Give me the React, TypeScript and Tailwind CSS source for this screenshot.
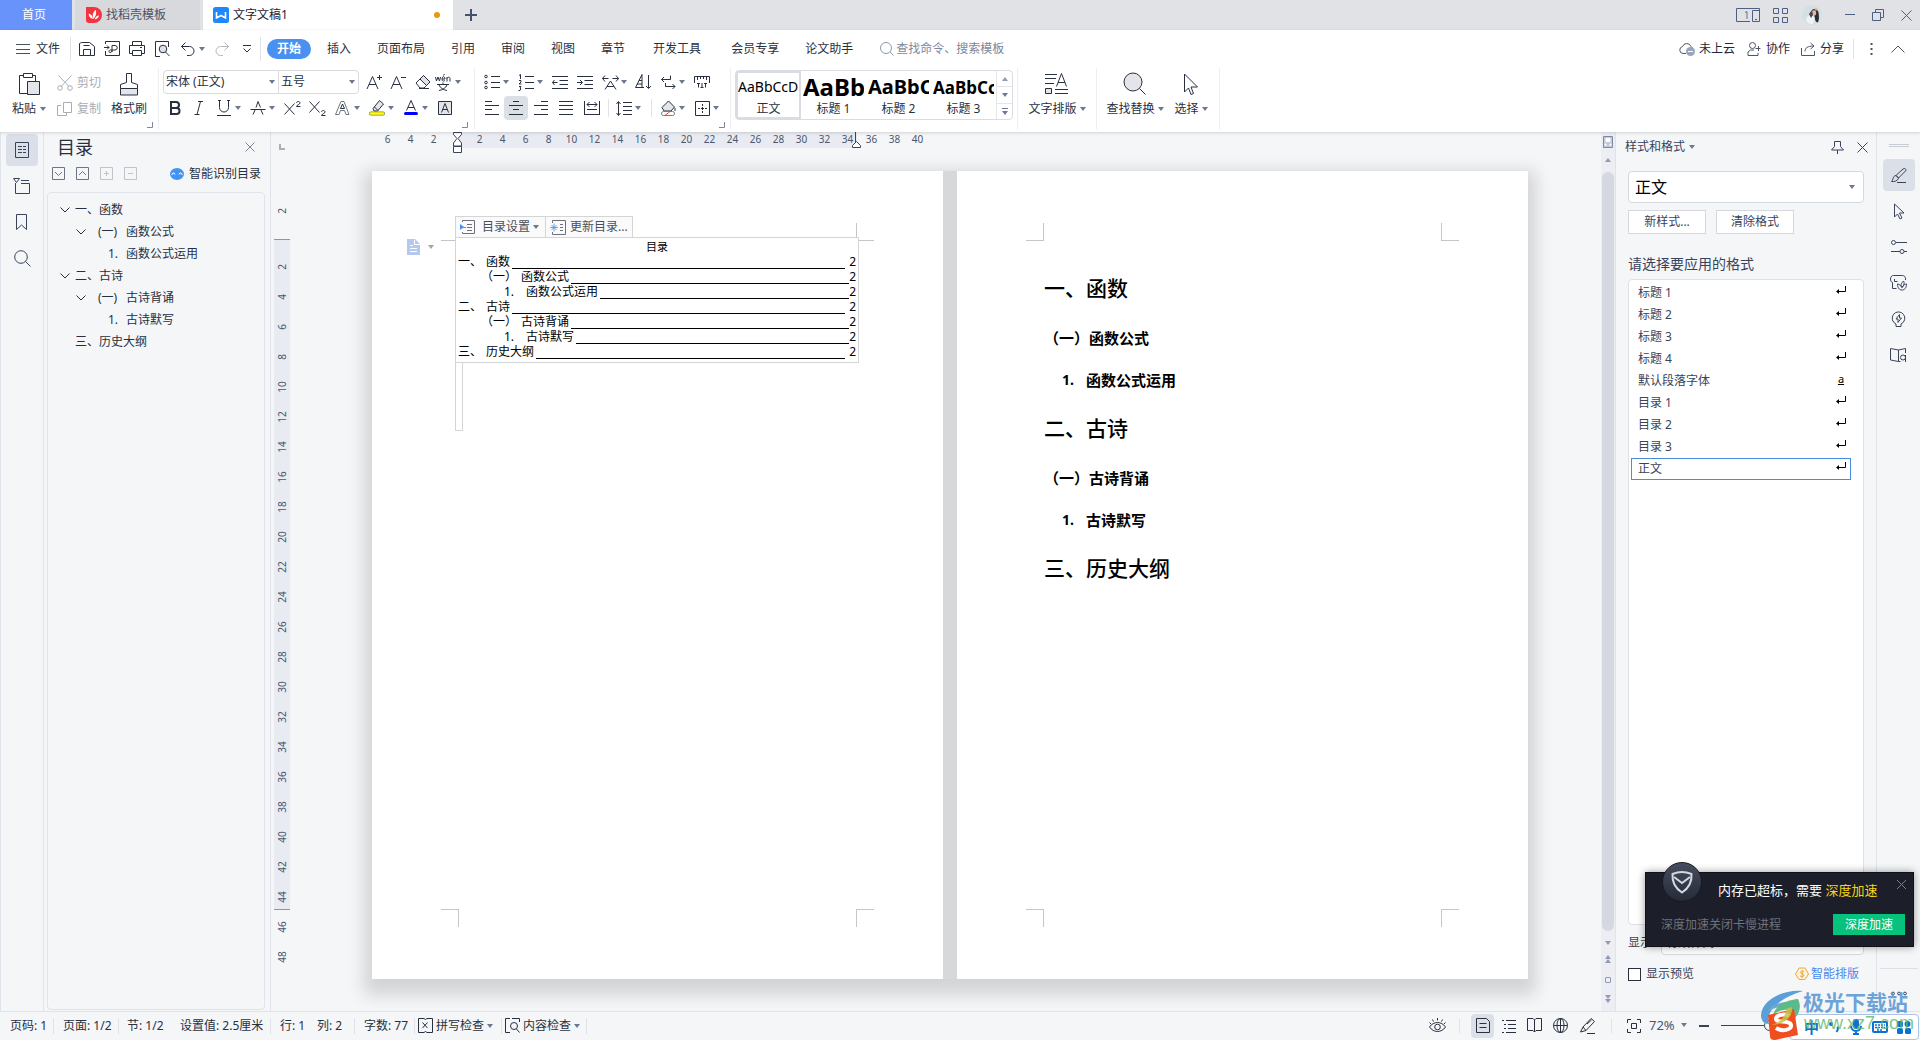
import React, { type ReactNode } from 'react';

type IconProps = { w?: number; h?: number; className?: string; sw?: number; children: ReactNode };

function Icon({ w = 16, h = 16, className = '', sw = 1, children }: IconProps) {
  return (
    <svg
      width={w}
      height={h}
      viewBox={`0 0 ${w} ${h}`}
      fill="none"
      stroke="currentColor"
      strokeWidth={sw}
      className={`shrink-0 ${className}`}
      aria-hidden="true"
    >
      {children}
    </svg>
  );
}

function Caret({ className = 'text-[#6b7891]' }: { className?: string }) {
  return (
    <svg width="6" height="4" viewBox="0 0 6 4" className={`shrink-0 ${className}`} aria-hidden="true">
      <path d="M0 0h6L3 4z" fill="currentColor" />
    </svg>
  );
}

function CaretUp({ className = 'text-[#8f9bb3]' }: { className?: string }) {
  return (
    <svg width="6" height="4" viewBox="0 0 6 4" className={`shrink-0 ${className}`} aria-hidden="true">
      <path d="M0 4h6L3 0z" fill="currentColor" />
    </svg>
  );
}

function CornerMark() {
  return (
    <Icon w={6} h={6} className="mb-1 self-end text-[#7d889e]">
      <path d="M5.500 0v5.500H0" />
    </Icon>
  );
}

function Tool({ label, className = 'w-6', children }: { label: string; className?: string; children: ReactNode }) {
  return (
    <button type="button" aria-label={label} className={`flex h-6 shrink-0 items-center justify-center ${className}`}>
      {children}
    </button>
  );
}

function SplitTool({ label, children }: { label: string; children: ReactNode }) {
  return (
    <button type="button" aria-label={label} className="flex h-6 w-[34px] shrink-0 items-center pl-1">
      <span className="flex w-[18px] justify-center">{children}</span>
      <span className="flex w-2.5 justify-center">
        <Caret />
      </span>
    </button>
  );
}

function VRule({ className = 'h-6' }: { className?: string }) {
  return <div className={`w-px shrink-0 bg-[#e1e3e8] ${className}`} />;
}

/* ---------------------------------------------------------------- title bar */

function TitleBar() {
  return (
    <header className="flex h-[30px] shrink-0 items-stretch bg-[#e1e2e6]">
      <button type="button" className="w-[72px] bg-[#6893fa] pr-1 text-xs text-white">
        首页
      </button>
      <button type="button" className="ml-[3px] flex w-[125px] items-center gap-1 bg-[#d8d9dc] pl-[11px] text-xs text-[#4a5468]">
        <svg width="16" height="16" viewBox="0 0 16 16" aria-hidden="true">
          <path d="M0 0h8a8 8 0 0 1 0 16H3a3 3 0 0 1-3-3z" fill="#f5333f" />
          <path d="M7 12C3.500 11 2.500 8.500 2.800 6.500 5 7 6.500 9 7 12zM7.300 12C6 8.500 7 5 9.500 2.800 11 6 9.800 10 7.300 12zM8.500 12.300C9.500 10 11 8.500 13 8.300 13 10.500 11 12.300 8.500 12.300z" fill="#fff" />
        </svg>
        找稻壳模板
      </button>
      <div className="ml-[3px] flex w-[250px] items-center bg-white pr-[13px] pl-2.5">
        <button type="button" className="flex items-center gap-1 text-xs text-[#1d2433]">
          <svg width="16" height="16" viewBox="0 0 16 16" aria-hidden="true">
            <rect width="16" height="16" rx="2.500" fill="#1f86fb" />
            <path d="M3.500 5v6L8 8.500l4.500 2.500V5" fill="none" stroke="#fff" strokeWidth="1.600" />
          </svg>
          文字文稿1
        </button>
        <span className="ml-auto size-1.5 rounded-full bg-[#e59a0c]" />
      </div>
      <button type="button" aria-label="新建" className="flex w-9 items-center justify-center text-[#45526c]">
        <Icon w={12} h={12} sw={2}>
          <path d="M6 0v12M0 6h12" />
        </Icon>
      </button>
      <div className="ml-auto flex items-center pr-2 text-[#4d5f85]">
        <button type="button" aria-label="窗口布局" className="flex w-6 justify-center">
          <svg width="24" height="14" viewBox="0 0 24 14" fill="none" stroke="currentColor" aria-hidden="true">
            <path d="M14 13.500H.5V.5h23v13H16.500M16.500 2.500h7M16.500 2.500v11M19 11.500h2" />
            <path d="M9 4.500l2-1V11" stroke="#6f6f86" />
          </svg>
        </button>
        <button type="button" aria-label="应用" className="ml-3 flex w-4 justify-center">
          <Icon w={15} h={15}>
            <path d="M.5.5h5v5h-5zM9.500.5h5v5h-5zM.5 9.500h5v5h-5zM9.500 9.500h5v5h-5z" />
          </Icon>
        </button>
        <button type="button" aria-label="账户" className="ml-3.5 flex">
          <svg width="20" height="20" viewBox="0 0 20 20" aria-hidden="true">
            <circle cx="10" cy="10" r="10" fill="#d3dfe5" />
            <path d="M10 5c2-2 6-1 6.500 2.500.4 3.500 1 6-.5 10-2 0-3.500-3-3.500-6z" fill="#2e2a33" />
            <ellipse cx="12" cy="8" rx="2.200" ry="2.800" fill="#e3b9ab" />
            <path d="M5 12c2-2 4-3 6-1l2 2-2 6c-3 .5-5-1-7-3z" fill="#eef4f6" />
            <path d="M7 9l3-4 1 5-2 3z" fill="#4e4550" />
            <circle cx="14" cy="4.500" r="1.200" fill="#d9b24b" />
          </svg>
        </button>
        <VRule className="ml-2.5 h-5 bg-[#c6c9d0]" />
        <button type="button" aria-label="最小化" className="ml-3 flex">
          <Icon w={10} h={10}>
            <path d="M0 4.500h10" />
          </Icon>
        </button>
        <button type="button" aria-label="还原" className="ml-[17px] flex">
          <Icon w={12} h={12}>
            <path d="M.5 3.500h8v8h-8zM3.500 3V.5h8v8H9" />
          </Icon>
        </button>
        <button type="button" aria-label="关闭" className="ml-[17px] flex">
          <Icon w={11} h={11}>
            <path d="M.5.5l10 10M10.500.5l-10 10" />
          </Icon>
        </button>
      </div>
    </header>
  );
}

/* ----------------------------------------------------------------- menu row */

const MENUS: { label: string; cls: string }[] = [
  { label: '插入', cls: 'ml-[3px]' },
  { label: '页面布局', cls: '' },
  { label: '引用', cls: '' },
  { label: '审阅', cls: '' },
  { label: '视图', cls: '' },
  { label: '章节', cls: '' },
  { label: '开发工具', cls: 'ml-0.5' },
  { label: '会员专享', cls: 'ml-1' },
  { label: '论文助手', cls: '' },
];

function MenuRow() {
  return (
    <nav className="flex h-[38px] shrink-0 items-center text-xs text-[#28303f]">
      <button type="button" className="ml-4 flex items-center gap-1.5">
        <Icon w={14} h={12} className="text-[#4a5261]">
          <path d="M0 1.500h14M0 6.500h14M0 10.500h14" />
        </Icon>
        文件
      </button>
      <VRule className="mr-1 ml-2.5 h-6" />
      <Tool label="保存" className="w-6">
        <Icon>
          <path d="M4.500 14.500h-4V2.500l2-1h8l5 4v9h-4M4.500 14.500v-6h7v6zM4.500 4.500h6" />
        </Icon>
      </Tool>
      <Tool label="输出为PDF" className="w-[26px]">
        <Icon>
          <path d="M1.500 3V.5h14v14h-14V10M0 6.500h5M3 4.500l2 2-2 2M8 11V4.500h3a2 2 0 0 1 0 4.500H6.500c-2 0-2 2.500-.5 2.500s2-1 2-2" />
        </Icon>
      </Tool>
      <Tool label="打印" className="w-6">
        <Icon>
          <path d="M3.500 4.500v-4h9v4M3.500 12.500h-3v-8h15v8h-3M3.500 9.500h9v5h-9zM11 6.500h2" />
        </Icon>
      </Tool>
      <Tool label="打印预览" className="w-[26px]">
        <Icon>
          <path d="M6 15.500H1.500V.5h13V6" />
          <circle cx="9" cy="8" r="3.800" fill="#dfe1e6" />
          <path d="M11.500 11l4 4" />
        </Icon>
      </Tool>
      <button type="button" aria-label="撤销" className="flex w-[34px] items-center gap-1 pl-1.5">
        <Icon w={14} h={14}>
          <path d="M4.500.5l-4 4 4 4M.5 4.500h8a4.500 4.500 0 0 1 0 9H6" />
        </Icon>
        <Caret />
      </button>
      <Tool label="恢复" className="w-[25px]">
        <Icon w={14} h={14} className="text-[#b3b8c2]">
          <path d="M9.500.5l4 4-4 4M13.500 4.500h-8a4.500 4.500 0 0 0 0 9H8" />
        </Icon>
      </Tool>
      <Tool label="自定义快速访问工具栏" className="w-[26px]">
        <Icon w={10} h={8}>
          <path d="M1 .5h8M1.500 3.500L5 7l3.500-3.500" />
        </Icon>
      </Tool>
      <VRule className="h-6" />
      <button type="button" className="ml-1.5 h-5 w-11 rounded-full bg-[#4a90f0] text-xs font-bold text-white">
        开始
      </button>
      {MENUS.map((m) => (
        <button key={m.label} type="button" className={`h-6 px-[13px] ${m.cls}`}>
          {m.label}
        </button>
      ))}
      <label className="ml-3.5 flex items-center gap-0.5 text-[#7c879c]">
        <Icon w={14} h={14} className="text-[#8c98b0]">
          <circle cx="6" cy="6" r="5.500" />
          <path d="M10 10l3.500 3.500" />
        </Icon>
        <input
          aria-label="查找命令、搜索模板"
          placeholder="查找命令、搜索模板"
          className="w-32 bg-transparent outline-none placeholder:text-[#7c879c]"
        />
      </label>
      <div className="ml-auto flex items-center pr-[15px] text-[#4d5666]">
        <button type="button" className="flex items-center gap-1 text-[#1f2838]">
          <Icon w={16} h={14} className="text-[#4d5666]">
            <path d="M7 11.500H4A3.500 3.500 0 0 1 3.500 4.600 4.500 4.500 0 0 1 12 4.500l1.500 1.500" />
            <circle cx="11.500" cy="9.500" r="4.500" fill="#9aa5bc" stroke="none" />
            <path d="M9 9.500h5" stroke="#fff" />
          </Icon>
          未上云
        </button>
        <button type="button" className="ml-3 flex items-center gap-[5px] text-[#1f2838]">
          <Icon w={14} h={14} className="text-[#4d5666]">
            <circle cx="5.500" cy="3.500" r="3" />
            <path d="M7 8H3.500L1 10v3.500h10V11M8.500 6.500h5M11.500 4v5" />
          </Icon>
          协作
        </button>
        <button type="button" className="ml-[11px] flex items-center gap-[5px] text-[#1f2838]">
          <Icon w={14} h={14} className="text-[#4d5666]">
            <path d="M.5 6v7.500h13V9M4 9.500C4 6 6.500 4 12.500 4M9.500 1l3.500 3-3.500 3" />
          </Icon>
          分享
        </button>
        <VRule className="ml-[9px] h-5" />
        <button type="button" aria-label="更多" className="ml-4 flex">
          <svg width="3" height="13" viewBox="0 0 3 13" fill="currentColor" aria-hidden="true">
            <path d="M.5 0h2v2h-2zM.5 5h2v2h-2zM.5 10h2v2h-2z" />
          </svg>
        </button>
        <button type="button" aria-label="收起功能区" className="ml-[18px] flex">
          <Icon w={14} h={8}>
            <path d="M.5 7.500L7 1l6.500 6.500" />
          </Icon>
        </button>
      </div>
    </nav>
  );
}

/* ------------------------------------------------------------------ ribbon */

function ClipboardGroup() {
  return (
    <div className="flex w-[158px] shrink-0 items-start pl-[11px]">
      <button type="button" className="flex w-9 flex-col items-center text-[#28303f]">
        <Icon w={22} h={24} className="mt-1">
          <path d="M9 21.500H1.500V3.500h4M14.500 3.500h3V9M5.500 1.500h9v4h-9z" />
          <path d="M9.500 9.500h12v13h-12z" fill="#e4e5e9" />
        </Icon>
        <span className="mt-1 flex items-center gap-1">
          粘贴
          <Caret />
        </span>
      </button>
      <div className="ml-2.5 flex flex-col text-[#a9adb5]">
        <button type="button" className="mt-0.5 flex h-[26px] items-center gap-1">
          <Icon>
            <path d="M1.500.5l10.500 11M14.500.5L4 11.500" />
            <circle cx="3" cy="13" r="2.300" />
            <circle cx="13" cy="13" r="2.300" />
          </Icon>
          剪切
        </button>
        <button type="button" className="flex h-[26px] items-center gap-1">
          <Icon>
            <path d="M6.500 1.500h8v10h-8zM4 4.500H.5v10h9V12" />
          </Icon>
          复制
        </button>
      </div>
      <button type="button" className="ml-2.5 flex flex-col items-center text-[#28303f]">
        <Icon w={18} h={24} className="mt-1">
          <path d="M.5 16.500h17v6.500H.5z" fill="#e4e5e9" />
          <path d="M.5 16.500v-4l6-2V1.500h5v9l6 2v4" />
        </Icon>
        <span className="mt-1">格式刷</span>
      </button>
      <CornerMark />
    </div>
  );
}

function FontGroup() {
  return (
    <div className="flex w-[315px] shrink-0 pl-1">
      <div className="flex w-[298px] shrink-0 flex-col">
        <div className="mt-0.5 flex h-6 items-center">
          <div className="flex h-6 w-[196px] shrink-0 items-center rounded-sm border border-[#d9dbe0]">
            <button type="button" aria-label="字体" className="flex h-full w-[115px] items-center justify-between border-r border-[#d9dbe0] pr-[3px] pl-0.5">
              宋体 (正文)
              <Caret />
            </button>
            <button type="button" aria-label="字号" className="flex h-full flex-1 items-center justify-between pr-[3px] pl-0.5">
              五号
              <Caret />
            </button>
          </div>
          <Tool label="增大字号" className="ml-[3px] w-6">
            <Icon>
              <path d="M1 15L6.500 2.500 12 15M3 10.500h7M11 3.500h5M13.500 1v5" />
            </Icon>
          </Tool>
          <Tool label="减小字号" className="w-6">
            <Icon>
              <path d="M1 15L6.500 2.500 12 15M3 10.500h7M11 3.500h5" />
            </Icon>
          </Tool>
          <Tool label="清除格式" className="w-[25px]">
            <Icon>
              <path d="M1 9l7.500-7.500L15 8l-6 6H5z" />
              <path d="M8.500 1.500L15 8l-3.500 3.500L5 5z" fill="#dfe1e6" />
              <path d="M4 14.500h10" />
            </Icon>
          </Tool>
          <button type="button" aria-label="拼音指南" className="flex shrink-0 items-center gap-1">
            <svg width="16" height="18" viewBox="0 0 16 18" fill="none" stroke="currentColor" aria-hidden="true">
              <path d="M.5 4l1 4 1.500-4 1.500 4 1-4M7 6h3c0-3-3-3-3 0s2 2 3 1.500M8.500 2.500l1-1.500M12 8.500V4M12 5.500c1-2 3-1.500 3 0v3M2 11.500h12M8 9.500v2M4 12c1 3 5 5 8 5.500M12 12c-1 3-5 5-8 5.500" />
            </svg>
            <Caret />
          </button>
        </div>
        <div className="mt-0.5 flex h-6 items-center">
          <Tool label="加粗">
            <Icon w={12} h={14} sw={2}>
              <path d="M2 1h5a2.800 2.800 0 0 1 0 6H2zM2 7h5.500a3 3 0 0 1 0 6H2z" />
            </Icon>
          </Tool>
          <Tool label="倾斜">
            <Icon w={10} h={14}>
              <path d="M4 .5h5M.5 13.500h5M6.500.5l-3.500 13" />
            </Icon>
          </Tool>
          <SplitTool label="下划线">
            <Icon w={16} h={16}>
              <path d="M3.500.5v7a4.500 4.500 0 0 0 9 0v-7M2 .5h3M11 .5h3M1 15.500h14" />
            </Icon>
          </SplitTool>
          <SplitTool label="删除线">
            <Icon w={16} h={14}>
              <path d="M3 13.500L5 9M11 9l2 4.500M6 6.500L8 .5l2.500 6M.5 8.500h15" />
            </Icon>
          </SplitTool>
          <Tool label="上标" className="ml-0.5 w-6">
            <Icon w={18} h={14}>
              <path d="M.5 2.500l10 11M10.500 2.500l-10 11M12.500 2c0-2 3.500-2 3.500 0 0 1.500-3.500 2-3.500 3.500h4" />
            </Icon>
          </Tool>
          <Tool label="下标" className="w-[25px]">
            <Icon w={18} h={15}>
              <path d="M.5.5l10 11M10.500.5l-10 11M12.500 11c0-2 3.500-2 3.500 0 0 1.500-3.500 2-3.500 3.500h4" />
            </Icon>
          </Tool>
          <SplitTool label="文字效果">
            <Icon w={16} h={15}>
              <path d="M.5 13.500L6 .5h3l5 13h-3l-1.500-4h-4l-1.500 4z" className="text-[#6f7683]" />
              <path d="M5.500 7.500L7.500 3l2 4.500z" />
            </Icon>
          </SplitTool>
          <SplitTool label="突出显示">
            <Icon w={16} h={16}>
              <path d="M4 8.500l6.500-8 4 3.500-6 7H5zM5.500 7l3.500 3.500" fill="#e4e5e9" />
              <path d="M2 13.500h12" stroke="#7e7e4a" strokeWidth="4" strokeLinecap="round" />
              <path d="M2 13.500h12" stroke="#ffff00" strokeWidth="2.600" strokeLinecap="round" />
            </Icon>
          </SplitTool>
          <SplitTool label="字体颜色">
            <Icon w={14} h={16}>
              <path d="M2.500 10.500L7 .5l4.500 10M4 7.500h6" />
              <path d="M1.500 13.500h11" stroke="#0000ff" strokeWidth="3" strokeLinecap="round" />
            </Icon>
          </SplitTool>
          <Tool label="字符底纹" className="w-[25px]">
            <Icon w={14} h={14}>
              <path d="M.5.5h13v13H.5z" fill="#e4e5e9" />
              <path d="M3.500 11.500l3.500-9 3.500 9M4.500 8.500h5" />
            </Icon>
          </Tool>
        </div>
      </div>
      <div className="ml-auto flex items-end pr-1.5">
        <CornerMark />
      </div>
    </div>
  );
}

function ParagraphGroup() {
  return (
    <div className="flex w-[255px] shrink-0 pl-1">
      <div className="flex w-[240px] shrink-0 flex-col">
        <div className="mt-0.5 flex h-6 items-center">
          <SplitTool label="项目符号">
            <Icon w={16} h={16}>
              <path d="M7 2.500h9M7 8.500h9M7 13.500h9" />
              <circle cx="2" cy="2.500" r="1.300" />
              <circle cx="2" cy="8.500" r="1.300" />
              <circle cx="2" cy="13.500" r="1.300" />
            </Icon>
          </SplitTool>
          <SplitTool label="编号">
            <Icon w={16} h={17}>
              <path d="M7 2.500h9M7 8.500h9M7 14.500h9M1 1.500l1.500-1V5M1 6.500h2v1.500L1 10h2.500M1 12.500h2L2 14l1 1-1 1.500H.5" />
            </Icon>
          </SplitTool>
          <Tool label="减少缩进量" className="w-[25px]">
            <Icon w={16} h={14}>
              <path d="M0 1.500h16M7.500 5.500H16M7.500 9.500H16M0 13.500h16M.5 7.500h5M2.500 5L.5 7.500l2 2.500" />
            </Icon>
          </Tool>
          <Tool label="增加缩进量" className="w-[25px]">
            <Icon w={16} h={14}>
              <path d="M0 1.500h16M7.500 5.500H16M7.500 9.500H16M0 13.500h16M0 7.500h5M3 5l2.500 2.500L3 10" />
            </Icon>
          </Tool>
          <SplitTool label="中文版式">
            <Icon w={17} h={15}>
              <path d="M3 14.500L8.500 6l5.500 8.500M5 11.500h7M.5 3.500h6M3 .5l-2.500 3 2.500 3M10.500 3.500h6M14 .5l2.500 3-2.500 3" />
            </Icon>
          </SplitTool>
          <Tool label="排序">
            <Icon w={16} h={16}>
              <path d="M.5 13.500L7 .5v13M4 6.500h3M2 10h5M.5 13.500H9M13.500 1v13M11 12l2.500 2.500L16 12" />
            </Icon>
          </Tool>
          <SplitTool label="显示段落标记">
            <Icon w={15} h={15}>
              <path d="M9.500.5v4H.5M3 2L.5 4.500 3 7M4.500 8v3.500h9.500M11.500 9l2.500 2.500-2.500 2.500" />
            </Icon>
          </SplitTool>
          <Tool label="制表位" className="w-[26px]">
            <Icon w={16} h={12}>
              <path d="M.5 7V.5h15V7M3.500 1v3M6.500 1v2M9.500 1v2M12.500 1v3M4.500 11.500v-4M3 7.500h3M8 7v4M6.500 11.500h3M11.500 11.500v-4M10 7.500h3" />
            </Icon>
          </Tool>
        </div>
        <div className="mt-0.5 flex h-6 items-center">
          <Tool label="左对齐" className="w-[25px]">
            <Icon w={14} h={14}>
              <path d="M0 .5h7M0 4.500h14M0 8.500h7M0 13.500h14" />
            </Icon>
          </Tool>
          <Tool label="居中对齐" className="w-6 rounded-sm bg-[#dbdfe6]">
            <Icon w={14} h={14}>
              <path d="M4 .5h6M0 4.500h14M4 8.500h6M0 13.500h14" />
            </Icon>
          </Tool>
          <Tool label="右对齐" className="w-[25px]">
            <Icon w={14} h={14}>
              <path d="M7 .5h7M0 4.500h14M7 8.500h7M0 13.500h14" />
            </Icon>
          </Tool>
          <Tool label="两端对齐" className="w-[26px]">
            <Icon w={14} h={14}>
              <path d="M0 .5h14M0 4.500h14M0 8.500h14M0 13.500h14" />
            </Icon>
          </Tool>
          <Tool label="分散对齐" className="w-[25px]">
            <Icon w={16} h={14}>
              <path d="M.5 0v14M15.500 0v14M3 8.500h10M0 13.500h16M3 3.500h10M5.500 1L3 3.500 5.500 6M10.500 1L13 3.500 10.500 6" />
            </Icon>
          </Tool>
          <VRule className="mr-0.5 ml-1 h-[18px]" />
          <SplitTool label="行距">
            <Icon w={16} h={15}>
              <path d="M7 1.500h9M7 5.500h9M7 9.500h9M7 13.500h9M2.500 1v13M.5 3l2-2.500 2 2.500M.5 12l2 2.500 2-2.500" />
            </Icon>
          </SplitTool>
          <VRule className="mr-[3px] ml-1.5 h-[18px]" />
          <SplitTool label="底纹颜色">
            <Icon w={17} h={17}>
              <path d="M2 7.500L8.500 1l6 6-3.500 4H4z" fill="#e4e5e9" />
              <path d="M15 8v3" />
              <rect x="1.500" y="11.500" width="13" height="4" rx="2" fill="#fff" stroke="#777c86" />
              <path d="M5 15.500l5-4" stroke="#e0453f" />
            </Icon>
          </SplitTool>
          <SplitTool label="边框">
            <Icon w={15} h={15}>
              <path d="M.5.5h14v14H.5zM7.500 3v2M7.500 6v3M7.500 10v2M3 7.500h2M6 7.500h3M10 7.500h2" />
            </Icon>
          </SplitTool>
        </div>
      </div>
      <CornerMark />
    </div>
  );
}

const STYLE_CARDS: { name: string; sample: string; cls: string; box: string }[] = [
  { name: '正文', sample: 'AaBbCcD', cls: 'text-sm', box: 'border-[#d9dce3]' },
  { name: '标题 1', sample: 'AaBb', cls: 'text-2xl font-bold', box: 'border-transparent' },
  { name: '标题 2', sample: 'AaBbC', cls: 'text-xl font-bold', box: 'border-transparent' },
  { name: '标题 3', sample: 'AaBbCc', cls: 'text-[17px] font-bold', box: 'border-transparent' },
];

function StylesGroup() {
  return (
    <div className="flex w-[286px] shrink-0 pt-0.5 pl-1">
      <div className="flex h-[50px] w-[278px] rounded-sm border border-[#d9dce3]">
        {STYLE_CARDS.map((s) => (
          <button key={s.name} type="button" className={`flex h-12 w-[65px] shrink-0 flex-col items-start overflow-hidden border-2 ${s.box}`}>
            <span className={`flex h-7 items-center text-black ${s.cls}`}>
              <span className="leading-none">{s.sample}</span>
            </span>
            <span className="w-full text-center text-xs leading-4">{s.name}</span>
          </button>
        ))}
        <div className="ml-auto flex w-4 flex-col border-l border-[#e4e6ea]">
          <button type="button" aria-label="上一行样式" className="flex flex-1 items-center justify-center border-b border-[#e4e6ea]">
            <CaretUp />
          </button>
          <button type="button" aria-label="下一行样式" className="flex flex-1 items-center justify-center border-b border-[#e4e6ea]">
            <Caret />
          </button>
          <button type="button" aria-label="更多样式" className="flex flex-1 flex-col items-center justify-center gap-0.5">
            <span className="h-px w-1.5 bg-[#6b7891]" />
            <Caret />
          </button>
        </div>
      </div>
    </div>
  );
}

function BigTool({ label, icon, className }: { label: string; icon: ReactNode; className: string }) {
  return (
    <button type="button" className={`flex shrink-0 flex-col items-center ${className}`}>
      <span className="mt-1 flex h-6 items-center">{icon}</span>
      <span className="mt-1 flex items-center gap-[3px]">
        {label}
        <Caret />
      </span>
    </button>
  );
}

function Ribbon() {
  return (
    <div className="flex h-16 shrink-0 text-xs leading-[18px] text-[#28303f]">
      <ClipboardGroup />
      <VRule className="h-[61px] bg-[#eceef1]" />
      <FontGroup />
      <VRule className="h-[61px] bg-[#eceef1]" />
      <ParagraphGroup />
      <VRule className="h-[61px] bg-[#eceef1]" />
      <StylesGroup />
      <VRule className="h-[61px] bg-[#eceef1]" />
      <BigTool
        label="文字排版"
        className="w-[78px]"
        icon={
          <Icon w={24} h={22}>
            <path d="M0 1.500h12M0 5.500h11M0 10.500h9M11.500 13.500l5-13 5 13M13 9.500h7M10 16.500h13M10 20.500h13" />
            <path d="M.5 15.500h6v5h-6z" fill="#e4e5e9" />
          </Icon>
        }
      />
      <VRule className="h-[61px] bg-[#eceef1]" />
      <BigTool
        label="查找替换"
        className="ml-1 w-[68px]"
        icon={
          <Icon w={24} h={24}>
            <circle cx="10" cy="10" r="9" fill="#e4e5e9" />
            <path d="M16.500 16.500l6 6" />
          </Icon>
        }
      />
      <BigTool
        label="选择"
        className="w-[44px]"
        icon={
          <Icon w={16} h={22}>
            <path d="M1.500 1v18l4-4 2.500 6.500 2.500-1L8 14h6.500z" />
          </Icon>
        }
      />
      <VRule className="ml-1.5 h-[61px] bg-[#eceef1]" />
    </div>
  );
}

/* ------------------------------------------------------------ left sidebar */

function LeftRail() {
  return (
    <aside className="flex w-11 shrink-0 flex-col items-center gap-1 border-x border-[#e0e3ea] pt-0.5 text-[#39435a]">
      <Tool label="目录" className="h-8 w-8 rounded-sm bg-[#dbdfe7]">
        <Icon>
          <path d="M1.500.5h13v15h-13zM4 4.500h4M9 4.500h3M4 7.500h4M9 7.500h3M4 10.500h4M9 10.500h3" />
        </Icon>
      </Tool>
      <Tool label="章节" className="h-8 w-8">
        <Icon w={18} h={16}>
          <path d="M2.500 5v10.500h14v-10H8M8 2.500h8M.5.5h6L3.500 4.500z" />
        </Icon>
      </Tool>
      <Tool label="书签" className="h-8 w-8">
        <Icon w={12} h={17}>
          <path d="M.5.5h10v15l-5-4.500-5 4.500z" />
        </Icon>
      </Tool>
      <Tool label="查找" className="h-8 w-8">
        <Icon w={17} h={17}>
          <circle cx="7" cy="7" r="6.300" />
          <path d="M11.500 11.500l5 5" />
        </Icon>
      </Tool>
    </aside>
  );
}

const OUTLINE: { level: 1 | 2 | 3; num: string; text: string; open?: boolean }[] = [
  { level: 1, num: '一、', text: '函数', open: true },
  { level: 2, num: '(一)', text: '函数公式', open: true },
  { level: 3, num: '1.', text: '函数公式运用' },
  { level: 1, num: '二、', text: '古诗', open: true },
  { level: 2, num: '(一)', text: '古诗背诵', open: true },
  { level: 3, num: '1.', text: '古诗默写' },
  { level: 1, num: '三、', text: '历史大纲' },
];

const OUTLINE_PAD = { 1: 'pl-3', 2: 'pl-7', 3: 'pl-10' };
const OUTLINE_MARK = { 1: 'w-[15px]', 2: 'w-5', 3: 'w-5' };
const OUTLINE_NUM = { 1: 'w-6', 2: 'w-[30px] pl-0.5', 3: 'w-[18px]' };

function OutlinePanel() {
  return (
    <section className="flex w-[227px] shrink-0 flex-col border-r border-[#e0e3ea] pr-[5px] pb-px pl-[3px] text-xs text-[#28303f]">
      <div className="flex h-[30px] items-center pr-2.5 pl-2.5">
        <h2 className="text-lg leading-7">目录</h2>
        <button type="button" aria-label="关闭目录" className="ml-auto flex text-[#7a8599]">
          <Icon w={10} h={10}>
            <path d="M.5.5l9 9M9.500.5l-9 9" />
          </Icon>
        </button>
      </div>
      <div className="flex h-[23px] items-center gap-[11px] pl-[5px] text-[#6d7585]">
        <button type="button" aria-label="展开">
          <Icon w={13} h={13}>
            <path d="M.5.5h12v12H.5zM3 5l3.500 3.500L10 5" />
          </Icon>
        </button>
        <button type="button" aria-label="折叠">
          <Icon w={13} h={13}>
            <path d="M.5.5h12v12H.5zM3 8l3.500-3.500L10 8" />
          </Icon>
        </button>
        <button type="button" aria-label="新增" className="text-[#bfc3cb]">
          <Icon w={13} h={13}>
            <path d="M.5.5h12v12H.5zM6.500 4v5M4 6.500h5" />
          </Icon>
        </button>
        <button type="button" aria-label="删除" className="text-[#bfc3cb]">
          <Icon w={13} h={13}>
            <path d="M.5.5h12v12H.5zM4 6.500h5" />
          </Icon>
        </button>
        <button type="button" className="mr-1 ml-auto flex items-center gap-[5px] text-[#28303f]">
          <svg width="14" height="12" viewBox="0 0 14 12" aria-hidden="true">
            <ellipse cx="7" cy="6" rx="7" ry="6" fill="#4393f3" />
            <path d="M1.500 7l1.500-2h1l1 1.500M9 6.500L10 5h1l1.500 2" stroke="#fff" fill="none" />
          </svg>
          智能识别目录
        </button>
      </div>
      <ul className="mt-[7px] flex-1 rounded-sm border border-[#e0e3ea] pt-1.5">
        {OUTLINE.map((o, i) => (
          <li key={i} className={`flex h-[22px] items-center ${OUTLINE_PAD[o.level]}`}>
            <span className={`flex shrink-0 ${OUTLINE_MARK[o.level]}`}>
              {o.open && (
                <Icon w={10} h={6}>
                  <path d="M.5.5L5 5 9.500.5" />
                </Icon>
              )}
            </span>
            <span className={`shrink-0 ${OUTLINE_NUM[o.level]}`}>{o.num}</span>
            {o.text}
          </li>
        ))}
      </ul>
    </section>
  );
}

/* --------------------------------------------------------------- document */

const V_NUMS = Array.from({ length: 22 }, (_, i) => (i + 1) * 2);

function VerticalRuler() {
  return (
    <div className="flex w-[22px] shrink-0 flex-col items-center text-[10px] leading-none text-[#4b566d]">
      <div className="flex h-[107px] w-4 flex-col items-center">
        <span className="mt-3 h-1.5 w-1.5 border-b-2 border-l-2 border-[#a9aeba]" />
        <span className="mt-[46px] flex h-[30px] items-center">
          <span className="-rotate-90">2</span>
        </span>
      </div>
      <div className="flex h-[671px] w-4 flex-col border-y border-[#8b96ad] bg-[#e8ebf1] pt-3">
        {V_NUMS.map((n) => (
          <span key={n} className="flex h-[30px] shrink-0 items-center justify-center">
            <span className="-rotate-90">{n}</span>
          </span>
        ))}
      </div>
      {[46, 48].map((n) => (
        <span key={n} className="flex h-[30px] items-center justify-center pt-1">
          <span className="-rotate-90">{n}</span>
        </span>
      ))}
    </div>
  );
}

function RulerNumbers({ nums }: { nums: number[] }) {
  return (
    <>
      {nums.map((n) => (
        <span key={n} className="w-[23px] shrink-0 text-center">
          {n}
        </span>
      ))}
    </>
  );
}

function HorizontalRuler() {
  return (
    <div className="flex h-4 shrink-0 pl-1 text-[10px] leading-[14px] text-[#4b566d]">
      <div className="flex w-[81px]">
        <RulerNumbers nums={[6, 4, 2]} />
      </div>
      <div className="relative flex w-[400px] bg-[#e8ebf1] pl-[11px]">
        <RulerNumbers nums={Array.from({ length: 17 }, (_, i) => (i + 1) * 2)} />
        <Icon w={9} h={22} className="absolute top-0 -left-1 text-[#39435a]">
          <path d="M.5.5h8v2L5 6.500l3.500 4.500v3h-8v-3L4 6.500.5 2.500zM.5 14.500h8v6h-8z" fill="#fff" />
        </Icon>
        <Icon w={9} h={18} className="absolute top-0 -right-1 text-[#39435a]">
          <path d="M3.500 0v10" />
          <path d="M4.500 9.500l4 4v2h-8v-2z" fill="#fff" />
        </Icon>
      </div>
      <div className="flex pl-[3px]">
        <RulerNumbers nums={[36, 38, 40]} />
      </div>
    </div>
  );
}

function PageMarks({ bottom = false }: { bottom?: boolean }) {
  const edge = bottom ? 'border-t' : 'border-b';
  return (
    <div className="flex shrink-0 justify-between px-[69px]">
      <span className={`h-[18px] w-[18px] border-r border-[#c6c6c6] ${edge}`} />
      <span className={`h-[18px] w-[18px] border-l border-[#c6c6c6] ${edge}`} />
    </div>
  );
}

function Sheet({ children }: { children: ReactNode }) {
  return (
    <article className="relative flex h-[808px] w-[571px] shrink-0 flex-col bg-white pt-[52px] pb-[52px] text-black">
      <PageMarks />
      {children}
      <div className="mt-auto">
        <PageMarks bottom />
      </div>
    </article>
  );
}

const TOC: { level: 1 | 2 | 3; num: string; text: string }[] = [
  { level: 1, num: '一、', text: '函数' },
  { level: 2, num: '（一）', text: '函数公式' },
  { level: 3, num: '1.', text: '函数公式运用' },
  { level: 1, num: '二、', text: '古诗' },
  { level: 2, num: '（一）', text: '古诗背诵' },
  { level: 3, num: '1.', text: '古诗默写' },
  { level: 1, num: '三、', text: '历史大纲' },
];

const TOC_PAD = { 1: '', 2: 'pl-[23px]', 3: 'pl-[46px]' };
const TOC_NUM = { 1: 'w-7', 2: 'w-10', 3: 'w-[22px]' };

function TocPage() {
  return (
    <Sheet>
      <div className="relative -mt-1 ml-[83px] w-[404px]">
        <div className="absolute bottom-full left-0 flex h-[21px] items-center border border-b-0 border-[#d5d5d5] bg-[#fafafa] text-xs text-[#4a4f59]">
          <button type="button" className="flex h-full items-center gap-[3px] border-r border-[#d5d5d5] pr-1.5 pl-1">
            <Icon w={15} h={14} className="mr-1 text-[#6c717b]">
              <path d="M2.500 2V.5h12v13h-12V12M7 4.500h5M7 7.500h5M7 10.500h5" />
              <path d="M0 4l4 3-4 3z" fill="#4a8df0" stroke="none" />
              <path d="M3 7.500h3" stroke="#4a8df0" />
            </Icon>
            目录设置
            <Caret />
          </button>
          <button type="button" className="flex h-full items-center gap-1 px-1">
            <Icon w={16} h={15} className="text-[#6c717b]">
              <path d="M2.500 3V.5h13v14h-13V12M10 4.500h3M10 7.500h3M10 10.500h3" />
              <path d="M0 7.500h8M4 3.500v8M1.500 5l5 5M6.500 5l-5 5" stroke="#4a8df0" strokeWidth=".8" />
            </Icon>
            更新目录...
          </button>
        </div>
        <div className="absolute top-0.5 -left-12 flex items-center gap-2">
          <svg width="13" height="16" viewBox="0 0 13 16" aria-hidden="true">
            <path d="M0 0h8l5 5v11H0z" fill="#b4c9ec" />
            <path d="M7.500 1v4.500H13M3 6.500h3M3 9.500h7M3 12.500h7" stroke="#fff" fill="none" />
          </svg>
          <Caret className="text-[#a5a5a5]" />
        </div>
        <div className="border border-[#d5d5d5] bg-white px-0.5 pt-px text-xs leading-[15px]">
          <div className="text-center text-[11px]">目录</div>
          <ol className="pb-[3px]">
            {TOC.map((t, i) => (
              <li key={i} className={`flex h-[15px] items-center ${TOC_PAD[t.level]}`}>
                <span className={`shrink-0 ${TOC_NUM[t.level]}`}>{t.num}</span>
                <span className="shrink-0">{t.text}</span>
                <span className={`ml-0.5 h-px flex-1 self-end bg-black ${t.level === 1 ? 'mr-1' : ''}`} />
                <span className="shrink-0">2</span>
              </li>
            ))}
          </ol>
        </div>
        <div className="h-[68px] w-2 border border-t-0 border-[#d5d5d5]" />
      </div>
    </Sheet>
  );
}

function BodyPage() {
  return (
    <Sheet>
      <div className="mt-5 ml-[87px] font-bold">
        {TOC.map((t, i) => {
          if (t.level === 1) {
            return (
              <h2 key={i} className="flex h-14 items-center text-[21px] font-medium">
                {t.num}
                {t.text}
              </h2>
            );
          }
          if (t.level === 2) {
            return (
              <h3 key={i} className="flex h-[42px] items-center text-[15px]">
                {t.num}
                {t.text}
              </h3>
            );
          }
          return (
            <h4 key={i} className="flex h-[42px] items-center pl-[18px] text-[15px]">
              <span className="w-6 text-sm">{t.num}</span>
              {t.text}
            </h4>
          );
        })}
      </div>
    </Sheet>
  );
}

function Workspace() {
  return (
    <main className="flex min-w-0 flex-1 justify-center overflow-hidden pl-1.5">
      <div className="flex w-[1156px] shrink-0 flex-col">
        <HorizontalRuler />
        <div className="mt-[23px] flex justify-between bg-[#d7d8da] shadow-[0_8px_16px_8px_rgba(0,0,0,0.14)]">
          <TocPage />
          <BodyPage />
        </div>
      </div>
    </main>
  );
}

function DocScrollbar() {
  return (
    <div className="flex w-3.5 shrink-0 flex-col items-center bg-[#eceef3] text-[#7d8aa5]">
      <button type="button" aria-label="标尺" className="mt-1 flex">
        <Icon w={10} h={12}>
          <path d="M.5.5h9v11h-9z" fill="#c3cada" />
          <path d="M3 2.500h4v3H3zM2 9.500V8h1v1.500M7 9.500V8h1v1.500" fill="#fff" stroke="#fff" />
        </Icon>
      </button>
      <button type="button" aria-label="向上滚动" className="mt-2 flex h-4 items-start pt-0.5">
        <CaretUp />
      </button>
      <div className="w-3 flex-1 rounded-full bg-[#d5d8e0]" />
      <button type="button" aria-label="向下滚动" className="mt-2.5 flex">
        <Caret className="text-[#8f9bb3]" />
      </button>
      <button type="button" aria-label="上一页" className="mt-2.5 flex flex-col">
        <CaretUp />
        <CaretUp />
      </button>
      <button type="button" aria-label="选择浏览对象" className="mt-3.5 size-1.5 rounded-[1px] border border-[#8f9bb3]" />
      <button type="button" aria-label="下一页" className="mt-3 mb-2 flex flex-col">
        <Caret className="text-[#8f9bb3]" />
        <Caret className="text-[#8f9bb3]" />
      </button>
    </div>
  );
}

/* ----------------------------------------------------------- styles panel */

const STYLE_LIST = ['标题 1', '标题 2', '标题 3', '标题 4', '默认段落字体', '目录 1', '目录 2', '目录 3', '正文'];

function StylesPanel() {
  return (
    <section className="flex w-[262px] shrink-0 flex-col border-x border-[#e0e3ea] pr-3 pl-3 text-xs text-[#39435a]">
      <div className="-mr-1 -ml-[3px] flex h-[30px] items-center">
        <button type="button" className="flex items-center gap-1 text-xs">
          样式和格式
          <Caret />
        </button>
        <button type="button" aria-label="固定" className="mr-[13px] ml-auto flex">
          <Icon w={13} h={13}>
            <path d="M3.500.5h6v5l3 3.500H.5l3-3.500zM6.500 9v4" />
          </Icon>
        </button>
        <button type="button" aria-label="关闭" className="flex">
          <Icon w={11} h={11}>
            <path d="M.5.5l10 10M10.500.5l-10 10" />
          </Icon>
        </button>
      </div>
      <button type="button" className="mt-[9px] flex h-8 shrink-0 items-center justify-between rounded-sm border border-[#d5d8df] bg-white pr-2 pl-1.5 text-base text-black">
        正文
        <Caret />
      </button>
      <div className="mt-[7px] flex gap-2.5">
        <button type="button" className="h-6 w-[78px] border border-[#d5d8df] bg-white">
          新样式...
        </button>
        <button type="button" className="h-6 w-[78px] border border-[#d5d8df] bg-white">
          清除格式
        </button>
      </div>
      <h3 className="mt-5 text-sm leading-5">请选择要应用的格式</h3>
      <ul className="mt-[5px] flex-1 rounded-sm border border-[#dfe1e7] bg-white pt-0.5 pr-3 pl-0.5">
        {STYLE_LIST.map((s) => (
          <li
            key={s}
            className={`flex h-[22px] items-center justify-between border pr-1 pl-1.5 ${s === '正文' ? 'border-[#4a8de0]' : 'border-transparent'}`}
          >
            {s}
            {s === '默认段落字体' ? (
              <span className="mb-1 w-2.5 text-center text-[11px] leading-3 text-black underline">a</span>
            ) : (
              <Icon w={10} h={9} className="mb-1.5 text-black">
                <path d="M9.500 0v5.500H1" />
                <path d="M0 5.500l3-2.500v5z" fill="currentColor" stroke="none" />
              </Icon>
            )}
          </li>
        ))}
      </ul>
      <div className="mt-[5px] flex h-[25px] items-center">
        <label htmlFor="shown-styles" className="w-[33px]">
          显示:
        </label>
        <select id="shown-styles" className="h-[25px] flex-1 appearance-none rounded-sm border border-[#d5d8df] bg-white px-1 text-xs">
          <option>有效样式</option>
        </select>
      </div>
      <div className="mt-[9px] mb-[27px] flex h-5 items-center">
        <label className="flex items-center gap-[5px]">
          <input type="checkbox" className="size-[13px] appearance-none border border-[#28303f] bg-white" />
          显示预览
        </label>
        <a href="#layout" className="mr-[5px] ml-auto flex items-center gap-0.5 text-[#4a86f0]">
          <Icon w={14} h={14} className="text-[#f0a93a]">
            <path d="M4 1h6l3.500 6L10 12.500H4L.5 7z" fill="#fdf3de" />
            <path d="M9 5C8 3.800 5.500 4 5.500 5.500S9 6.500 9 8.200 6 10 5 8.800M7.200 3v8" />
          </Icon>
          智能排版
        </a>
      </div>
    </section>
  );
}

function RightRail() {
  return (
    <aside className="flex w-[43px] shrink-0 flex-col items-center text-[#39435a]">
      <div className="mt-3 mb-3 h-[3px] w-5 border-y border-[#c8ccd4]" />
      <div className="flex flex-1 flex-col gap-1">
        <Tool label="样式" className="h-8 w-8 rounded-sm bg-[#dbdfe7]">
          <Icon w={17} h={17}>
            <path d="M14.500 1.500a1.500 1.500 0 0 1 1 2.500L8.500 11 6 8.500l7-6.500zM6 8.500L8.500 11C8 14 4 15 1.500 14.500 3.500 13 2.500 9 6 8.500zM7 15.500h9" />
          </Icon>
        </Tool>
        <Tool label="选择" className="h-8 w-8">
          <Icon w={12} h={17}>
            <path d="M1.500 1v13l3-3 2.500 5 2-1-2.500-5h4.500z" />
          </Icon>
        </Tool>
        <Tool label="属性" className="h-8 w-8">
          <Icon w={16} h={14}>
            <circle cx="2.500" cy="2.500" r="2" />
            <path d="M5 2.500h11M0 11.500h9M13 11.500h3" />
            <circle cx="11" cy="11.500" r="2" />
          </Icon>
        </Tool>
        <Tool label="模板" className="h-8 w-8">
          <Icon w={17} h={16}>
            <path d="M6.500 13.500H2.500V7.500C1 7 .5 5.500.5 4 .5 2 1.500.5 3.500.5h9c2 0 3 1.500 3 3.500v1M4.500 4v2.500h3" />
            <path d="M7.500 9c0 4 2 6 4.500 6s4.500-2 4.500-6c-1.500 0-3 1-4.500 3.500C10.500 10.500 9.500 9 7.500 9zM12 12.500c-2-3 0-5 1.500-6.500 1 1.500 1 4-1.500 6.500z" fill="#f5f6f8" />
          </Icon>
        </Tool>
        <Tool label="智能" className="h-8 w-8">
          <Icon w={15} h={17}>
            <path d="M5 15.500V13a6.300 6.300 0 1 1 5 0v2.500zM8.500 3.500L5 8h2v3.500L10.500 7h-2z" />
          </Icon>
        </Tool>
        <Tool label="资料" className="h-8 w-8">
          <Icon w={17} h={15}>
            <path d="M8.500 2v11.500L.5 12V.5L8.500 2l7-1.500V5M8.500 13.500h2" />
            <circle cx="13" cy="9.500" r="2.500" />
            <path d="M15.500 7v7" />
          </Icon>
        </Tool>
      </div>
      <div className="mb-[22px] h-px w-[38px] bg-[#dde0e6]" />
      <button type="button" aria-label="更多" className="mb-[15px] flex">
        <Icon w={16} h={5}>
          <circle cx="2" cy="2.500" r="1.400" />
          <circle cx="8" cy="2.500" r="1.400" />
          <circle cx="14" cy="2.500" r="1.400" />
        </Icon>
      </button>
    </aside>
  );
}

/* -------------------------------------------------------------- status bar */

function StatusBar() {
  return (
    <footer className="flex h-[29px] shrink-0 items-center border-t border-[#e0e3ea] bg-[#f5f6f8] pb-px text-xs whitespace-nowrap text-[#28303f]">
      <div className="flex items-center">
        <span className="w-[53px] pl-2.5">页码: 1</span>
        <VRule className="h-4" />
        <span className="w-16 pl-[9px]">页面: 1/2</span>
        <VRule className="h-4" />
        <span className="w-[61px] pl-2">节: 1/2</span>
        <span className="w-[90px]">设置值: 2.5厘米</span>
        <VRule className="h-4" />
        <span className="w-[46px] pl-[9px]">行: 1</span>
        <span className="w-[37px]">列: 2</span>
        <VRule className="h-4" />
        <span className="w-[59px] pl-[9px]">字数: 77</span>
        <VRule className="h-4" />
        <button type="button" className="flex w-[86px] items-center gap-[3px] pl-[3px]">
          <Icon w={15} h={15}>
            <path d="M6 .5H.5v14H6M9 .5h5.500v14H9M4.500 4.500l5 5.500M9.500 4.500l-5 5.500M6 .5l1.500 1L9 .5M6 14.500l1.500-1 1.500 1" />
          </Icon>
          拼写检查
          <Caret />
        </button>
        <VRule className="h-4" />
        <button type="button" className="flex w-[84px] items-center gap-[3px] pl-[3px]">
          <Icon w={15} h={15}>
            <path d="M5 .5H.5v14H5M7 .5h7.500V4" />
            <circle cx="9" cy="8" r="3.500" />
            <path d="M11.500 11l3 3.500" />
          </Icon>
          内容检查
          <Caret />
        </button>
        <VRule className="h-4" />
      </div>
      <div className="ml-auto flex items-center">
        <Tool label="护眼模式" className="w-6">
          <Icon w={17} h={15}>
            <path d="M.5 9c4-6 12-6 16 0-4 6-12 6-16 0zM8.500 0v2.500M3.500 1.500l1 2M13.500 1.500l-1 2M.5 4.500L2 6M16.500 4.500L15 6" />
            <circle cx="8.500" cy="9" r="2.800" />
          </Icon>
        </Tool>
        <VRule className="mr-[11px] ml-2.5 h-3.5" />
        <Tool label="页面视图" className="w-[23px] rounded-sm bg-[#dbdfe7]">
          <Icon w={14} h={15}>
            <path d="M.5.5h10l3 3v11H.5zM3.500 5.500h7M3.500 9.500h7" />
          </Icon>
        </Tool>
        <Tool label="大纲" className="ml-[3px] w-[23px]">
          <Icon w={14} h={14}>
            <path d="M0 1.500h2M4 1.500h10M2 5.500h2M6 5.500h8M2 9.500h2M6 9.500h8M0 13.500h2M4 13.500h10" />
          </Icon>
        </Tool>
        <Tool label="阅读版式" className="ml-[3px] w-[23px]">
          <Icon w={15} h={15}>
            <path d="M7.500 2v12M7.500 2L6 .5H.5v12H6L7.500 14 9 12.500h5.500V.5H9z" />
          </Icon>
        </Tool>
        <Tool label="Web版式" className="ml-[3px] w-[23px]">
          <Icon w={15} h={15}>
            <circle cx="7.500" cy="7.500" r="7" />
            <ellipse cx="7.500" cy="7.500" rx="3.500" ry="7" />
            <path d="M.5 7.500h14M7.500.5v14" />
          </Icon>
        </Tool>
        <Tool label="写作模式" className="ml-1 w-[23px]">
          <Icon w={17} h={16}>
            <path d="M12 .5l3.500 3L7 12.500l-5.500 1.500L4 9zM4 9l3 3.500M8 6l4.500-4M8 15.500h8" />
          </Icon>
        </Tool>
        <VRule className="mr-3.5 ml-3 h-3.5" />
        <Tool label="最佳显示比例" className="w-4">
          <Icon w={14} h={14}>
            <path d="M4 .5H.5V4M10 .5h3.500V4M4 13.500H.5V10M10 13.500h3.500V10M4.500 4.500h5v5h-5z" />
          </Icon>
        </Tool>
        <button type="button" className="ml-[7px] flex w-[50px] items-center gap-1.5 text-[13px] text-[#4b566d]">
          72%
          <Caret />
        </button>
        <button type="button" aria-label="缩小" className="h-0.5 w-2.5 bg-[#39435a]" />
        <input
          type="range"
          aria-label="显示比例"
          defaultValue={26}
          className="mr-6 ml-3 h-4 w-[175px] appearance-none bg-transparent [&::-webkit-slider-runnable-track]:h-px [&::-webkit-slider-runnable-track]:bg-[#39435a] [&::-webkit-slider-thumb]:-mt-[5px] [&::-webkit-slider-thumb]:size-[11px] [&::-webkit-slider-thumb]:appearance-none [&::-webkit-slider-thumb]:rounded-full [&::-webkit-slider-thumb]:border [&::-webkit-slider-thumb]:border-[#39435a] [&::-webkit-slider-thumb]:bg-[#f5f6f8]"
        />
      </div>
    </footer>
  );
}

/* ---------------------------------------------------------------- overlays */

function MemoryToast() {
  return (
    <div role="alert" className="absolute right-1.5 bottom-[93px] h-[75px] w-[269px] border border-[#0e1119] bg-[#1c1f2a] shadow-[0_0_8px_rgba(0,0,0,0.4)]">
      <div className="absolute -top-[11px] left-4 flex size-10 items-center justify-center rounded-full border border-[#171a22] bg-linear-to-b from-[#474d5e] to-[#262b38]">
        <Icon w={24} h={24} sw={2} className="text-[#d4d8e2]">
          <path d="M12 2c4 0 7 1 9.500 2C22 11 19 18 12 22.500 5 18 2 11 2.500 4 5 3 8 2 12 2z" />
          <path d="M4 7l8 6 8-6" />
        </Icon>
      </div>
      <button type="button" aria-label="关闭提示" className="absolute top-[7px] right-[7px] flex text-[#7c818d]">
        <Icon w={9} h={9}>
          <path d="M0 0l9 9M9 0L0 9" />
        </Icon>
      </button>
      <p className="pt-[7px] pl-[72px] text-[13px] leading-5 text-white">
        内存已超标，需要 <a href="#boost" className="text-[#f5d514]">深度加速</a>
      </p>
      <div className="mt-3.5 flex items-center justify-between pr-2 pl-[15px] text-xs">
        <span className="text-[#6e727d]">深度加速关闭卡慢进程</span>
        <button type="button" className="h-[21px] w-[72px] bg-[#07c27d] text-white">
          深度加速
        </button>
      </div>
    </div>
  );
}

function ImeBar() {
  return (
    <div className="absolute right-0 bottom-0 h-[50px] w-[159px] whitespace-nowrap">
      <div className="absolute right-px bottom-0 flex h-[26px] w-[130px] items-center gap-[9px] rounded-sm border border-[#a9c3e6] bg-white pl-3.5 text-[#0f6fd8]">
        <span className="text-[15px] leading-5 font-bold">中</span>
        <Icon w={12} h={12} sw={2}>
          <circle cx="3" cy="3" r="1" />
          <path d="M9 6c1.500 1 1 3-.5 5" />
        </Icon>
        <Icon w={14} h={16} sw={2}>
          <rect x="5" y="1" width="4" height="8" rx="2" fill="currentColor" />
          <path d="M2 7a5 5 0 0 0 10 0M7 12v3M4 15h6" />
        </Icon>
        <Icon w={16} h={12} sw={2}>
          <rect x="1" y="1" width="14" height="10" rx="1" />
          <path d="M3 4h10M3 6.500h10M5 9h6" strokeDasharray="2 1" strokeWidth="1.500" />
        </Icon>
        <svg width="14" height="13" viewBox="0 0 14 13" fill="currentColor" aria-hidden="true">
          <rect width="6" height="6" rx="1.500" />
          <circle cx="10.500" cy="3" r="3" />
          <rect y="7" width="6" height="6" rx="1.500" />
          <rect x="8" y="7" width="6" height="6" rx="1.500" />
        </svg>
      </div>
      <svg width="42" height="50" viewBox="0 0 42 50" className="absolute bottom-0 left-0" aria-hidden="true">
        <path d="M42 1C22-1 1 10 0 25c0 6 3 9 8 9C4 22 18 8 42 1z" fill="#5a9fd8" />
        <path d="M6 22c6-10 22-12 29-8-3 1-6 1-9 3-8-1-14 1-20 5z" fill="#6fa8c9" />
        <path d="M37 9c6 12-3 25-20 26 8-3 13-9 13-15-7-1-14 1-18 5 2-9 13-15 25-16z" fill="#5cb98a" />
        <path d="M7 25l26-6 4 26-23 5c-3 0-5-1-5-4z" fill="#f04e1f" />
        <path d="M28 26c-4-3-13-1-13 3s14 1 15 6-9 7-15 3" stroke="#fff" strokeWidth="4" fill="none" />
        <path d="M31 17c1 10-7 17-20 18 9-3 14-9 14-16z" fill="#c4c64a" opacity=".85" />
      </svg>
      <div className="absolute top-0 left-[42px] text-[21px] leading-6 font-bold text-[#5f9bd3] opacity-90">极光下载站</div>
      <div className="absolute top-6 left-[43px] font-['Liberation_Sans'] text-lg leading-[18px] text-[#5cb86a] opacity-80">www.xz7.com</div>
    </div>
  );
}

export default function App() {
  return (
    <div className="relative flex h-screen min-h-[1040px] flex-col overflow-hidden bg-[#f5f6f8] font-['Noto_Sans','Noto_Sans_CJK_SC',sans-serif]">
      <TitleBar />
      <div className="relative z-10 bg-white shadow-[0_1px_3px_rgba(0,0,0,0.15)]">
        <MenuRow />
        <Ribbon />
      </div>
      <div className="flex min-h-0 flex-1">
        <LeftRail />
        <OutlinePanel />
        <VerticalRuler />
        <Workspace />
        <DocScrollbar />
        <StylesPanel />
        <RightRail />
      </div>
      <StatusBar />
      <MemoryToast />
      <ImeBar />
    </div>
  );
}
